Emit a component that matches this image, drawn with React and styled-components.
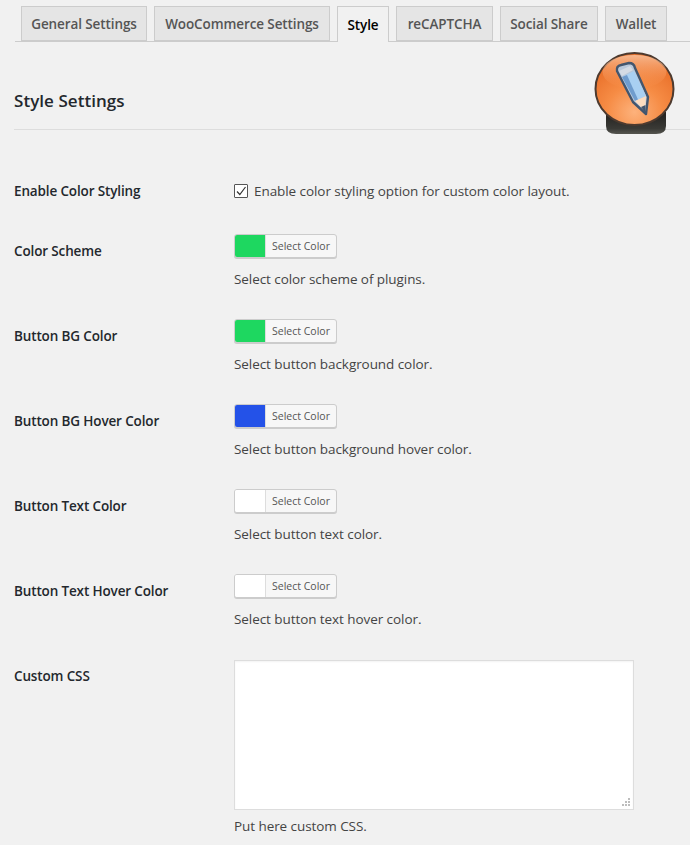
import React from "react";
import styled, { createGlobalStyle } from "styled-components";

const Global = createGlobalStyle`
  html, body { margin: 0; padding: 0; background: #f1f1f1; }
  body { font-family: "Open Sans", "Noto Sans", sans-serif; color: #444; overflow: hidden; }
`;
const Page = styled.div`
  position: relative;
  width: 690px;
  height: 845px;
  overflow: hidden;
  background: #f1f1f1;
`;
const TabBar = styled.nav`
  display: flex;
  gap: 7px;
  margin: 6px 0 0 15px;
  padding-left: 6px;
  height: 35px;
  border-bottom: 1px solid #ccc;
`;
const Tab = styled.a`
  box-sizing: border-box;
  flex: none;
  width: ${p => p.$w}px;
  height: ${p => (p.$active ? 36 : 35)}px;
  display: flex;
  align-items: center;
  justify-content: center;
  font-size: 13.5px;
  font-weight: 600;
  letter-spacing: -0.1px;
  color: ${p => (p.$active ? "#000" : "#555")};
  background: ${p => (p.$active ? "#f1f1f1" : "#e5e5e5")};
  border: 1px solid #ccc;
  border-bottom: ${p => (p.$active ? "none" : "1px solid #ccc")};
`;
const Heading = styled.h2`
  margin: 47px 0 0 14px;
  height: 24px;
  font-size: 17px;
  line-height: 24px;
  font-weight: 600;
  letter-spacing: 0.05px;
  color: #23282d;
`;
const Rule = styled.hr`
  margin: 16px 0 0 14px;
  border: none;
  border-top: 1px solid #ddd;
  height: 0;
`;
const Form = styled.div`
  margin: 51px 0 0 14px;
  display: grid;
  grid-template-columns: 220px 400px;
`;
const Label = styled.div`
  font-size: 13.5px;
  line-height: 20px;
  font-weight: 600;
  color: #23282d;
  letter-spacing: -0.14px;
  margin-top: ${p => p.$mt || 0}px;
`;
const Cell = styled.div`
  position: relative;
  min-height: ${p => p.$h}px;
`;
const CheckLine = styled.label`
  display: flex;
  align-items: center;
  gap: 6px;
  height: 20px;
  font-size: 13.5px;
  color: #444;
  letter-spacing: -0.07px;
`;
const Box = styled.span`
  box-sizing: border-box;
  width: 14px;
  height: 14px;
  border: 1px solid #555;
  border-radius: 1px;
  background: #fff;
  display: flex;
  align-items: center;
  justify-content: center;
`;
const ColorButton = styled.div`
  box-sizing: border-box;
  display: flex;
  width: 103px;
  height: 24px;
  border: 1px solid #ccc;
  border-radius: 3px;
  box-shadow: 0 1px 0 #ccc;
  overflow: hidden;
  background: #f7f7f7;
`;
const Swatch = styled.span`
  width: 30px;
  background: ${p => p.$color};
`;
const SwatchLabel = styled.span`
  flex: 1;
  border-left: 1px solid #ddd;
  font-size: 10.5px;
  line-height: 22px;
  text-align: center;
  color: #555;
`;
const Desc = styled.p`
  margin: ${p => p.$mt}px 0 0;
  font-size: 13.5px;
  line-height: 20px;
  letter-spacing: -0.07px;
  color: #444;
`;
const Area = styled.textarea`
  display: block;
  box-sizing: border-box;
  width: 400px;
  height: 150px;
  padding: 4px;
  background: #fff;
  border: 1px solid #ddd;
  outline: none;
  resize: none;
  box-shadow: inset 0 1px 2px rgba(0,0,0,.05);
`;
const Grip = styled.svg`
  position: absolute;
  left: 386px;
  top: 137px;
`;
const Badge = styled.svg`
  position: absolute;
  left: 590px;
  top: 50px;
`;

const tabs = [
  ["General Settings", 126],
  ["WooCommerce Settings", 176],
  ["Style", 52, true],
  ["reCAPTCHA", 97],
  ["Social Share", 98],
  ["Wallet", 62],
];
const colors = [
  ["Color Scheme", "#1ed760", "Select color scheme of plugins."],
  ["Button BG Color", "#1ed760", "Select button background color."],
  ["Button BG Hover Color", "#2452e8", "Select button background hover color."],
  ["Button Text Color", "#ffffff", "Select button text color."],
  ["Button Text Hover Color", "#ffffff", "Select button text hover color."],
];

export default function App() {
  return (
    <Page>
      <Global />
      <TabBar>
        {tabs.map(([t, w, a]) => (
          <Tab key={t} $w={w} $active={a}>{t}</Tab>
        ))}
      </TabBar>
      <Heading>Style Settings</Heading>
      <Rule />
      <Badge width="90" height="90" viewBox="0 0 90 90">
        <defs>
          <radialGradient id="orb" cx="50%" cy="82%" r="72%">
            <stop offset="0%" stopColor="#fdb27c" />
            <stop offset="50%" stopColor="#f68c45" />
            <stop offset="100%" stopColor="#e9702a" />
          </radialGradient>
          <linearGradient id="shine" x1="0" y1="0" x2="0" y2="1">
            <stop offset="0%" stopColor="#fbcfb0" stopOpacity=".75" />
            <stop offset="100%" stopColor="#ff9a55" stopOpacity="0" />
          </linearGradient>
          <linearGradient id="base" x1="0" y1="0" x2="0" y2="1">
            <stop offset="0%" stopColor="#23211e" />
            <stop offset="75%" stopColor="#3a3a36" />
            <stop offset="100%" stopColor="#55554f" />
          </linearGradient>
        </defs>
        <path d="M16 62 H76 V76 Q76 84 66 84 H26 Q16 84 16 76 Z" fill="url(#base)" />
        <ellipse cx="44.500" cy="39" rx="39" ry="36" fill="url(#orb)" stroke="#4d3a2f" strokeWidth="2" />
        <ellipse cx="44.500" cy="22" rx="32" ry="17" fill="url(#shine)" />
        <path d="M27 21 Q26 16 31 15 L39 13 Q44 13 45 18 L58 47 L56 64 L43 52 Z" fill="#b9c8da" stroke="#43566e" strokeWidth="2.4" strokeLinejoin="round" />
        <path d="M32 27 L44 21 L56 46 L45 51 Z" fill="#a9d0f2" />
        <path d="M32 27 L37 25 L48 49.500 L45 51 Z" fill="#6f9ccd" />
        <path d="M29 21 L40 16 L43 20 L32 26 Z" fill="#d4dbe4" />
        <path d="M45 51 L56 46 L55 61 Z" fill="#fbdcc0" />
        <path d="M51 57 L55.500 55 L55.500 63 Z" fill="#43566e" />
      </Badge>
      <Form>
        <Label>Enable Color Styling</Label>
        <Cell $h={53}>
          <CheckLine>
            <Box>
              <svg width="12" height="12" viewBox="0 0 12 12">
                <path d="M2 6.500 L4.800 9.500 L10.500 2" fill="none" stroke="#333" strokeWidth="1.2" />
              </svg>
            </Box>
            Enable color styling option for custom color layout.
          </CheckLine>
        </Cell>
        {colors.map(([l, c, d], i) => (
          <React.Fragment key={l}>
            <Label $mt={7}>{l}</Label>
            <Cell $h={i === 4 ? 86 : 85}>
              <ColorButton>
                <Swatch $color={c} />
                <SwatchLabel>Select Color</SwatchLabel>
              </ColorButton>
              <Desc $mt={11}>{d}</Desc>
            </Cell>
          </React.Fragment>
        ))}
        <Label $mt={6}>Custom CSS</Label>
        <Cell $h={170}>
          <Area />
          <Grip width="11" height="11" viewBox="0 0 11 11">
            <g fill="#bdbdbd">
              <rect x="8" y="1" width="2" height="2" />
              <rect x="5" y="4" width="2" height="2" />
              <rect x="8" y="4" width="2" height="2" />
              <rect x="2" y="7" width="2" height="2" />
              <rect x="5" y="7" width="2" height="2" />
              <rect x="8" y="7" width="2" height="2" />
            </g>
          </Grip>
          <Desc $mt={6}>Put here custom CSS.</Desc>
        </Cell>
      </Form>
    </Page>
  );
}
